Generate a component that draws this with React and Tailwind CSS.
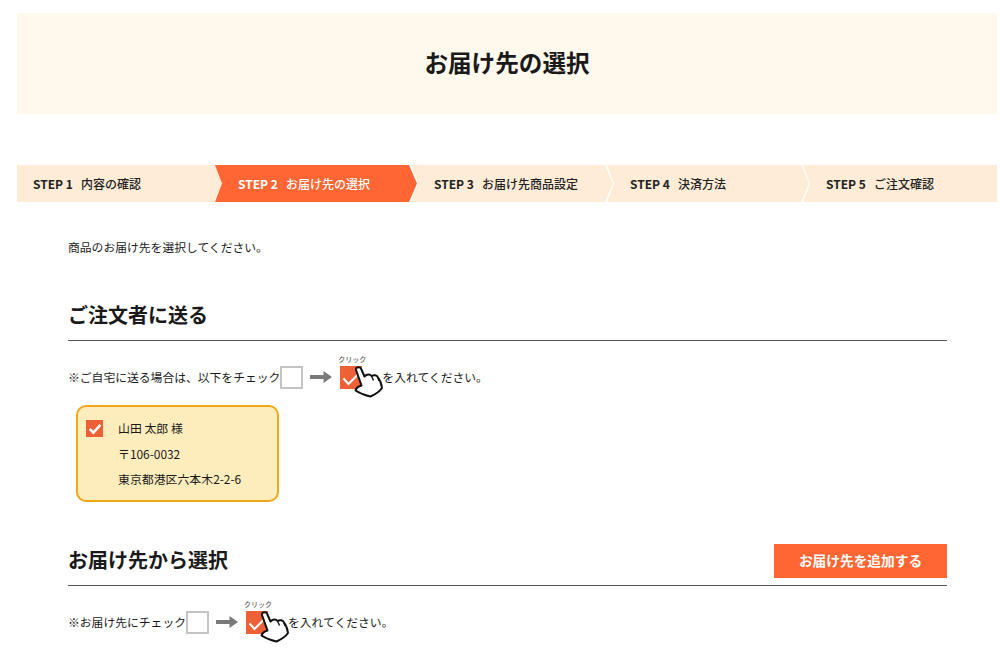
const font = { fontFamily: '"Noto Sans CJK JP", "Noto Sans", sans-serif' };

const steps = [
  { no: "STEP 1", label: "内容の確認", box: "w-[206px] pl-4 [clip-path:polygon(0_0,198px_0,100%_50%,198px_100%,0_100%)]" },
  { no: "STEP 2", label: "お届け先の選択", active: true, box: "-ml-2 w-[202px] pl-[23px] [clip-path:polygon(0_0,194px_0,100%_50%,194px_100%,0_100%,7px_50%)]" },
  { no: "STEP 3", label: "お届け先商品設定", box: "-ml-1.5 w-[202px] pl-[23px] [clip-path:polygon(0_0,194px_0,100%_50%,194px_100%,0_100%,7px_50%)]" },
  { no: "STEP 4", label: "決済方法", box: "-ml-1.5 w-[202px] pl-[23px] [clip-path:polygon(0_0,194px_0,100%_50%,194px_100%,0_100%,7px_50%)]" },
  { no: "STEP 5", label: "ご注文確認", box: "-ml-1.5 w-[194px] pl-[23px] [clip-path:polygon(0_0,100%_0,100%_100%,0_100%,7px_50%)]" },
];

function Check({ className, d = "M3.5 12.5 L8.5 18 L19 7.5", width = 2 }) {
  return (
    <svg viewBox="0 0 22 23" className={className}>
      <path d={d} fill="none" stroke="white" strokeWidth={width} />
    </svg>
  );
}

function Hand() {
  return (
    <svg viewBox="0 0 32 36" className="absolute left-3 top-[-2px] h-9 w-8">
      <path
        d="M4 6 C3.5 3 8 2 9.2 5 L12.5 12.5 C15 10 18 10 19.5 12 C22 10.5 25 11 26 13.5 C28 16 29.5 20 30 24 C28 27 24 30 18.5 32.5 C13 31.5 8 29.5 3.5 26.5 C4 24.5 6 22.5 9.5 21.5 Z"
        fill="white"
        stroke="#111"
        strokeWidth="2"
        strokeLinejoin="round"
      />
      <path d="M19.5 12 L21.5 16.5 M26 13.5 L27 17" fill="none" stroke="#111" strokeWidth="1.4" />
    </svg>
  );
}

function Arrow() {
  return (
    <svg viewBox="0 0 22 14" className="h-3.5 w-[22px]">
      <path d="M0 5 H13.5 V1 L22 7 L13.5 13 V9 H0 Z" fill="#7a7a7a" />
    </svg>
  );
}

function Hint({ before, after }) {
  return (
    <div className="flex h-[24px] items-center text-[11.8px] text-[#1a1a1a]">
      <span>{before}</span>
      <span className="h-[23px] w-[23px] border-2 border-[#c4c4c4] bg-white" />
      <span className="ml-[7px]">
        <Arrow />
      </span>
      <span className="relative ml-2 h-[23px] w-[22px] bg-[#ee6136]">
        <span className="absolute -top-[12px] left-[-2px] whitespace-nowrap text-[7px] font-medium leading-[10px] text-[#666]">クリック</span>
        <Check className="h-[23px] w-[22px]" />
        <Hand />
      </span>
      <span className="ml-5">{after}</span>
    </div>
  );
}

export default function App() {
  return (
    <div style={font} className="h-[648px] overflow-hidden bg-white text-[#1a1a1a]">
      <div className="ml-[17px] mt-[13px] flex h-[101px] w-[980px] items-center justify-center bg-[#fff8ec] pb-px">
        <h1 className="text-[23.6px] font-bold text-[#1a1a1a]">お届け先の選択</h1>
      </div>

      <div className="ml-[17px] mt-[51px] flex h-[37px] w-[980px]">
        {steps.map((s) => (
          <div
            key={s.no}
            className={`flex shrink-0 items-center gap-2 text-xs ${s.box} ${s.active ? "bg-[#ff6633] text-white" : "bg-[#feecd6] text-[#222]"}`}
          >
            <span className="font-bold">{s.no}</span>
            <span className="font-medium">{s.label}</span>
          </div>
        ))}
      </div>

      <div className="mx-[53px] mt-9 pl-[15px]">
        <p className="text-[11.8px] leading-[18px]">商品のお届け先を選択してください。</p>

        <div className="mt-[40px] flex h-[38px] items-center">
          <h2 className="text-xl font-bold text-[#1a1a1a]">ご注文者に送る</h2>
        </div>
        <div className="mt-[6px] h-px bg-[#555]" />

        <div className="mt-6">
          <Hint before="※ご自宅に送る場合は、以下をチェック" after="を入れてください。" />
        </div>

        <div className="ml-2 mt-[16px] flex h-[97px] w-[203px] rounded-[10px] border-2 border-[#f0a818] bg-[#fdecbc] pl-2 pt-[13px]">
          <span className="h-[17px] w-[17px] shrink-0 bg-[#ee6136]">
            <Check className="h-[17px] w-[17px]" d="M4.5 12 L9.5 17 L19 6.5" width={3.4} />
          </span>
          <div className="ml-[15px] -mt-[5px] text-[11.9px] leading-[25.5px]">
            <p>山田 太郎 様</p>
            <p>〒106-0032</p>
            <p>東京都港区六本木2-2-6</p>
          </div>
        </div>

        <div className="mt-[42px] flex h-[34px] items-center justify-between">
          <h2 className="-mt-[2px] text-xl font-bold text-[#1a1a1a]">お届け先から選択</h2>
          <button className="h-[34px] w-[173px] bg-[#ff6633] pb-0.5 text-[13.7px] font-bold text-white">お届け先を追加する</button>
        </div>
        <div className="mt-[7px] h-px bg-[#555]" />

        <div className="mt-6">
          <Hint before="※お届け先にチェック" after="を入れてください。" />
        </div>
      </div>
    </div>
  );
}
